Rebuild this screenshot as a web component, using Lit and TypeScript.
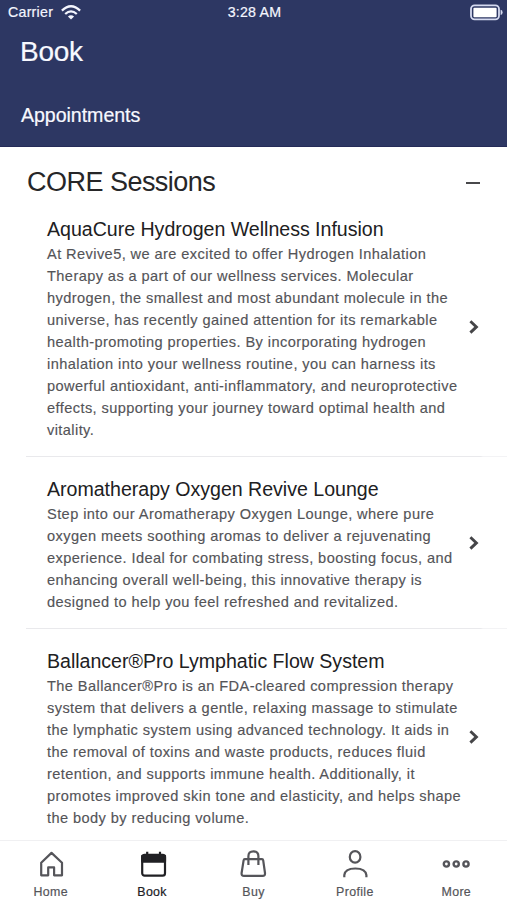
import { LitElement, html, css, svg } from "lit";
import { customElement, property } from "lit/decorators.js";

interface Service {
  name: string;
  lines: string[];
}

const services: Service[] = [
  {
    name: "AquaCure Hydrogen Wellness Infusion",
    lines: [
      "At Revive5, we are excited to offer Hydrogen Inhalation",
      "Therapy as a part of our wellness services. Molecular",
      "hydrogen, the smallest and most abundant molecule in the",
      "universe, has recently gained attention for its remarkable",
      "health-promoting properties. By incorporating hydrogen",
      "inhalation into your wellness routine, you can harness its",
      "powerful antioxidant, anti-inflammatory, and neuroprotective",
      "effects, supporting your journey toward optimal health and",
      "vitality.",
    ],
  },
  {
    name: "Aromatherapy Oxygen Revive Lounge",
    lines: [
      "Step into our Aromatherapy Oxygen Lounge, where pure",
      "oxygen meets soothing aromas to deliver a rejuvenating",
      "experience. Ideal for combating stress, boosting focus, and",
      "enhancing overall well-being, this innovative therapy is",
      "designed to help you feel refreshed and revitalized.",
    ],
  },
  {
    name: "Ballancer®Pro Lymphatic Flow System",
    lines: [
      "The Ballancer®Pro is an FDA-cleared compression therapy",
      "system that delivers a gentle, relaxing massage to stimulate",
      "the lymphatic system using advanced technology. It aids in",
      "the removal of toxins and waste products, reduces fluid",
      "retention, and supports immune health. Additionally, it",
      "promotes improved skin tone and elasticity, and helps shape",
      "the body by reducing volume.",
    ],
  },
];

const tabs = [
  {
    label: "Home",
    icon: svg`<path d="M5.2 12.8 15.5 2.9 26 12.8V25.3H18.1V17.4H12.2V25.3H5.2Z"/>`,
  },
  {
    label: "Book",
    active: true,
    icon: svg`<rect x="5.2" y="4.8" width="22.8" height="20.9" rx="2.4"/><path d="M5.2 5.8H28V11.6H5.2Z" fill="currentColor"/><path d="M10.2 1.8V5M23 1.8V5"/>`,
  },
  {
    label: "Buy",
    icon: svg`<path d="M6.8 9.2H24Q25 9.2 25.2 10.4L27 23Q27.2 25.9 24.6 25.9H6Q3.4 25.9 3.6 23L5.6 10.4Q5.8 9.2 6.8 9.2Z"/><path d="M10.4 15V6.2Q10.4 1.3 15.4 1.3T20.4 6.2V15"/>`,
  },
  {
    label: "Profile",
    icon: svg`<ellipse cx="15.1" cy="6.9" rx="5.3" ry="5.8"/><path d="M4.3 27.2V25.2Q4.8 18.5 15.3 18.5T26.4 25.2V27.2"/>`,
  },
  {
    label: "More",
    icon: svg`<g stroke-width="2.4"><circle cx="5.4" cy="14" r="2.6"/><circle cx="15.2" cy="14" r="2.6"/><circle cx="25" cy="14" r="2.6"/></g>`,
  },
];

@customElement("status-bar")
class StatusBar extends LitElement {
  static styles = css`
    :host {
      display: grid;
      grid-template-columns: 1fr auto 1fr;
      align-items: center;
      height: 24px;
      padding: 0 4px 0 8px;
      color: #f4f6ff;
      font-size: 14.2px;
      -webkit-text-stroke: 0.2px currentColor;
    }
    .carrier {
      display: flex;
      align-items: center;
      gap: 8px;
      letter-spacing: 0.25px;
    }
    .time {
      letter-spacing: 0.2px;
      transform: translateX(-1px);
    }
    .battery {
      justify-self: end;
    }
    svg {
      display: block;
    }
  `;
  render() {
    return html`
      <div class="carrier">
        <span>Carrier</span>
        <svg width="20" height="15" viewBox="0 0 20 15" fill="none" stroke="currentColor" stroke-width="2.3">
          <path d="M.9 5.6Q10-3 19.1 5.6M4.2 9Q10 3.8 15.8 9" />
          <path d="M6.9 11.5Q10 8.8 13.1 11.5L10 14.6Z" fill="currentColor" stroke="none" />
        </svg>
      </div>
      <span class="time">3:28 AM</span>
      <svg class="battery" width="33" height="17" viewBox="0 0 33 17">
        <rect x="1" y="1.4" width="28" height="14" rx="3.6" fill="none" stroke="#d5daf0" stroke-width="1.8" />
        <rect x="3.4" y="3.8" width="23.2" height="9.4" rx="1" fill="#fff" />
        <path d="M30.6 5.8Q32.6 6.2 32.6 8.4T30.6 11Z" fill="#d5daf0" />
      </svg>
    `;
  }
}

@customElement("service-row")
class ServiceRow extends LitElement {
  @property({ attribute: false }) service!: Service;
  static styles = css`
    :host {
      display: block;
      padding-left: 26px;
    }
    .row {
      box-sizing: border-box;
      display: flex;
      align-items: center;
      justify-content: space-between;
      padding: 19px 27px 15px 21px;
      border-bottom: 1px solid;
      border-image: linear-gradient(to right, #e9e9ec 454px, #f3f3f5 456px) 1;
    }
    .name {
      margin: 0 0 1px;
      font-size: 19.6px;
      line-height: 26px;
      font-weight: 400;
      letter-spacing: -0.02px;
      color: #202022;
      white-space: nowrap;
    }
    .text {
      margin: 0;
      width: 416px;
      font-size: 14.6px;
      line-height: 22px;
      letter-spacing: 0.41px;
      color: #545458;
      white-space: pre;
      -webkit-text-stroke: 0.15px currentColor;
    }
    .chevron {
      flex: none;
      margin-bottom: 2px;
    }
  `;
  render() {
    return html`
      <div class="row">
        <div>
          <h3 class="name">${this.service.name}</h3>
          <p class="text">${this.service.lines.join("\n")}</p>
        </div>
        <svg class="chevron" width="12" height="16" viewBox="0 0 12 16" fill="none" stroke="#454548" stroke-width="2.9">
          <path d="M2.4 1.2 8.4 6.9 2.4 12.6" />
        </svg>
      </div>
    `;
  }
}

@customElement("tab-bar")
class TabBar extends LitElement {
  static styles = css`
    :host {
      box-sizing: border-box;
      display: grid;
      grid-template-columns: repeat(5, 1fr);
      height: 60px;
      border-top: 1px solid #f0f0f2;
      background: #fff;
    }
    .tab {
      display: flex;
      flex-direction: column;
      align-items: center;
      padding-top: 9px;
      color: #55555a;
      font-size: 12.4px;
      line-height: 16px;
      letter-spacing: 0.35px;
      -webkit-text-stroke: 0.2px currentColor;
    }
    .active {
      color: #202024;
    }
    .icon {
      display: block;
      margin-bottom: 6px;
    }
  `;
  render() {
    return tabs.map(
      (t) => html`
        <div class="tab ${t.active ? "active" : ""}">
          <svg class="icon" width="30" height="28" viewBox="0 0 30 28" fill="none" stroke="currentColor" stroke-width="2.2" stroke-linejoin="round">
            ${t.icon}
          </svg>
          <span>${t.label}</span>
        </div>
      `,
    );
  }
}

@customElement("app-root")
class AppRoot extends LitElement {
  static styles = css`
    :host {
      display: flex;
      flex-direction: column;
      height: 900px;
      overflow: hidden;
      background: #fff;
      font-family: "Liberation Sans", Arial, sans-serif;
    }
    .header {
      flex: none;
      box-sizing: border-box;
      height: 147px;
      background: #2d3763;
      border-bottom: 1px solid #252b58;
      color: #f8f9ff;
    }
    .title {
      margin: 8px 0 0 20px;
      font-size: 28px;
      line-height: 40px;
      font-weight: 400;
      letter-spacing: -0.3px;
      -webkit-text-stroke: 0.2px currentColor;
    }
    .subtitle {
      margin: 31px 0 0 21px;
      font-size: 19.6px;
      line-height: 24px;
      letter-spacing: -0.05px;
      -webkit-text-stroke: 0.2px currentColor;
    }
    .content {
      flex: 1;
      min-height: 0;
      overflow: hidden;
    }
    .section {
      display: flex;
      align-items: center;
      justify-content: space-between;
      height: 50px;
      padding: 0 27px;
    }
    .heading {
      margin: 20px 0 0;
      font-size: 27px;
      line-height: 30px;
      font-weight: 400;
      letter-spacing: -0.52px;
      color: #262628;
    }
    .minus {
      width: 14px;
      height: 2px;
      margin-top: 22px;
      background: #48484b;
    }
    tab-bar {
      flex: none;
    }
  `;
  render() {
    return html`
      <header class="header">
        <status-bar></status-bar>
        <h1 class="title">Book</h1>
        <div class="subtitle">Appointments</div>
      </header>
      <main class="content">
        <div class="section">
          <h2 class="heading">CORE Sessions</h2>
          <div class="minus"></div>
        </div>
        ${services.map((s) => html`<service-row .service=${s}></service-row>`)}
      </main>
      <tab-bar></tab-bar>
    `;
  }
}
